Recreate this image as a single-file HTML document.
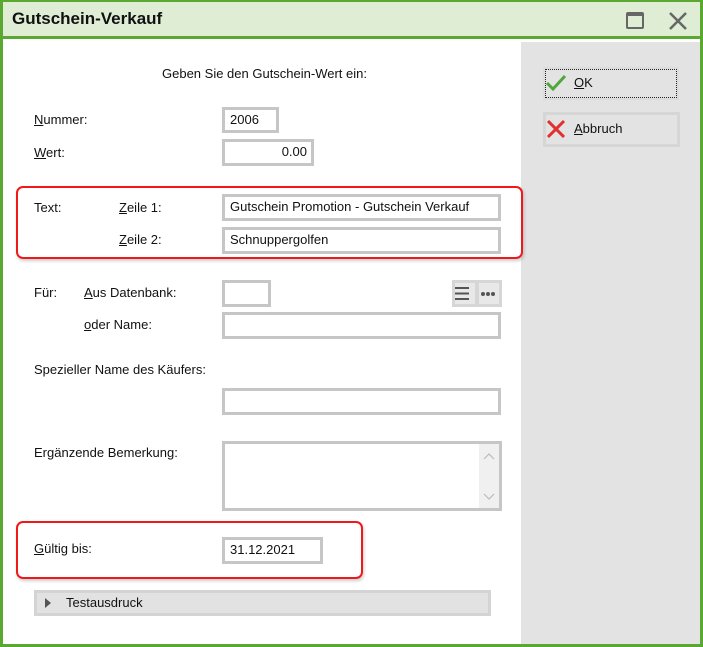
<!DOCTYPE html>
<html><head><meta charset="utf-8"><style>
*{box-sizing:border-box;margin:0;padding:0}
body{width:703px;height:647px;position:relative;overflow:hidden;background:#fff;font-family:"Liberation Sans",sans-serif;font-size:13px;color:#111}
.a{position:absolute}
.in{position:absolute;border:3px solid #c6c6c6;background:#fff;font-size:13px;padding-left:5px;line-height:20px}
.red{position:absolute;border:2px solid #f01818;border-radius:7px;box-shadow:1px 2px 3px rgba(0,0,0,.2)}
u{text-decoration:underline}
</style></head><body>
<div class="a" style="left:0;top:0;width:703px;height:647px;border:3px solid #5aa832;border-top-width:2px"></div>
<div class="a" style="left:3px;top:2px;width:697px;height:37px;background:#dfedd5;border-bottom:3px solid #5aa832"></div>
<div class="a" style="left:12px;top:9px;font-size:17px;font-weight:bold;color:#111">Gutschein-Verkauf</div>
<div class="a" style="left:626px;top:12px;width:18px;height:17px;border:2px solid #666;border-top-width:4px;border-radius:2px"></div>
<svg class="a" style="left:668px;top:11px" width="20" height="20"><path d="M2 2L18 18M18 2L2 18" stroke="#666" stroke-width="2.5"/></svg>
<div class="a" style="left:521px;top:42px;width:179px;height:602px;background:#e3e3e3"></div>
<div class="a" style="left:543px;top:67px;width:136px;height:33px;background:#dcdcdc;padding:2px"><div style="width:100%;height:100%;border:1px dotted #222;background:#e3e3e3"></div></div>
<svg class="a" style="left:545px;top:74px" width="22" height="18"><path d="M2 9L8 15L20 2" stroke="#4fa63a" stroke-width="3" fill="none"/></svg>
<div class="a" style="left:574px;top:75px"><u>O</u>K</div>
<div class="a" style="left:543px;top:112px;width:137px;height:35px;border:3px solid #d6d6d6"></div>
<svg class="a" style="left:546px;top:119px" width="20" height="20"><path d="M2 2L18 18M18 2L2 18" stroke="#e03030" stroke-width="3"/></svg>
<div class="a" style="left:574px;top:121px"><u>A</u>bbruch</div>
<div class="a" style="left:162px;top:66px">Geben Sie den Gutschein-Wert ein:</div>
<div class="a" style="left:34px;top:112px"><u>N</u>ummer:</div>
<div class="in" style="left:222px;top:107px;width:57px;height:26px">2006</div>
<div class="a" style="left:34px;top:145px"><u>W</u>ert:</div>
<div class="in" style="left:222px;top:139px;width:92px;height:27px;text-align:right;padding-right:4px">0.00</div>
<div class="red" style="left:16px;top:186px;width:507px;height:73px"></div>
<div class="a" style="left:34px;top:200px">Text:</div>
<div class="a" style="left:119px;top:200px"><u>Z</u>eile 1:</div>
<div class="in" style="left:222px;top:194px;width:279px;height:27px">Gutschein Promotion - Gutschein Verkauf</div>
<div class="a" style="left:119px;top:232px"><u>Z</u>eile 2:</div>
<div class="in" style="left:222px;top:227px;width:279px;height:27px">Schnuppergolfen</div>
<div class="a" style="left:34px;top:285px">Für:</div>
<div class="a" style="left:84px;top:285px"><u>A</u>us Datenbank:</div>
<div class="in" style="left:222px;top:280px;width:49px;height:27px"></div>
<div class="a" style="left:452px;top:280px;width:50px;height:27px;background:#d6d6d6"></div>
<div class="a" style="left:455px;top:283px;width:20px;height:21px;background:#e8e8e8"></div>
<div class="a" style="left:479px;top:283px;width:20px;height:21px;background:#e8e8e8"></div>
<svg class="a" style="left:452px;top:280px" width="50" height="27"><path d="M3 8h14M3 13.5h14M3 19h14" stroke="#555" stroke-width="2"/><circle cx="31" cy="14" r="2" fill="#555"/><circle cx="36" cy="14" r="2" fill="#555"/><circle cx="41" cy="14" r="2" fill="#555"/></svg>
<div class="a" style="left:84px;top:317px"><u>o</u>der Name:</div>
<div class="in" style="left:222px;top:312px;width:279px;height:27px"></div>
<div class="a" style="left:34px;top:362px">Spezieller Name des Käufers:</div>
<div class="in" style="left:222px;top:388px;width:279px;height:27px"></div>
<div class="a" style="left:34px;top:445px">Er<u>g</u>änzende Bemerkung:</div>
<div class="in" style="left:222px;top:441px;width:280px;height:70px"></div>
<div class="a" style="left:479px;top:444px;width:20px;height:64px;background:#f0f0f0"></div>
<svg class="a" style="left:479px;top:444px" width="20" height="64"><path d="M5 15l5-5 5 5M5 50l5 5 5-5" stroke="#bbb" fill="none" stroke-width="1.2"/></svg>
<div class="red" style="left:16px;top:521px;width:347px;height:58px"></div>
<div class="a" style="left:34px;top:541px"><u>G</u>ültig bis:</div>
<div class="in" style="left:222px;top:537px;width:101px;height:27px">31.12.2021</div>
<div class="a" style="left:34px;top:590px;width:457px;height:26px;background:#e2e2e2;border:3px solid #d4d4d4"></div>
<svg class="a" style="left:44px;top:597px" width="8" height="12"><path d="M1 1L7 6L1 11Z" fill="#555"/></svg>
<div class="a" style="left:66px;top:595px">Testausdruck</div>
</body></html>
